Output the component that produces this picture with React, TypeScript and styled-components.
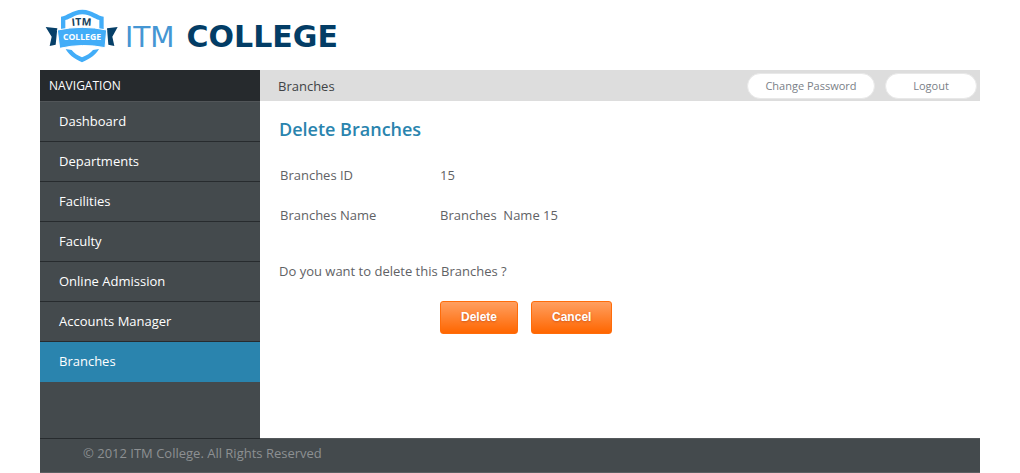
import React from "react";
import styled, { createGlobalStyle } from "styled-components";

const GlobalStyle = createGlobalStyle`
  *, *::before, *::after { box-sizing: border-box; }
  body {
    margin: 0;
    background: #fff;
    color: #5f6265;
    font: 13px/20px "Open Sans", "Noto Sans", sans-serif;
  }
`;

const Page = styled.div`
  display: flex;
  flex-direction: column;
  min-height: 100vh;
  padding: 0 40px;
`;

const Header = styled.header`
  height: 70px;
  padding: 8px 5px 0;
`;

const Brand = styled.a`
  display: inline-flex;
  align-items: center;
  gap: 6px;
  text-decoration: none;
`;

const Wordmark = styled.span`
  display: flex;
  align-items: baseline;
  gap: 12px;
  padding-top: 2px;
  font: 28px/32px "DejaVu Sans", sans-serif;
  color: #4596d3;
`;

const College = styled.strong`
  font-size: 30px;
  color: #033d66;
`;

const Main = styled.div`
  display: flex;
  flex: 1;
`;

const Sidebar = styled.nav`
  position: relative;
  width: 220px;
  flex-shrink: 0;
  margin-bottom: -1px;
  background: #444a4d;
  border-bottom: 1px solid #272b2e;
`;

const NavTitle = styled.h2`
  margin: 0;
  height: 31px;
  padding: 0 9px;
  background: #262a2d;
  color: #fff;
  font-size: 12px;
  font-weight: 400;
  line-height: 31px;
`;

const NavList = styled.ul`
  margin: 0;
  padding: 0;
  list-style: none;
  border-top: 1px solid #515558;
`;

const NavLink = styled.a<{ $active?: boolean }>`
  display: block;
  height: 40px;
  padding: 0 19px;
  line-height: 38px;
  color: #fff;
  text-decoration: none;
  background: ${(p) => (p.$active ? "#2a84ae" : "transparent")};
  border-bottom: 1px solid ${(p) => (p.$active ? "#2a84ae" : "#272b2e")};
`;

const Content = styled.main`
  flex: 1;
  min-width: 0;
`;

const TopBar = styled.div`
  display: flex;
  align-items: center;
  justify-content: space-between;
  height: 31px;
  padding: 0 3px 0 18px;
  background: #ddd;
  color: #3f4346;
`;

const Actions = styled.div`
  display: flex;
  gap: 10px;
`;

const Pill = styled.button<{ $wide?: boolean }>`
  width: ${(p) => (p.$wide ? 128 : 92)}px;
  height: 26px;
  padding: 0;
  border: 1px solid #e8e8e8;
  border-radius: 13px;
  background: #fff;
  color: #7a8087;
  font: 11px/24px "Open Sans", "Noto Sans", sans-serif;
  cursor: pointer;
`;

const Panel = styled.section`
  padding: 16px 19px;
`;

const Title = styled.h1`
  margin: 0 0 24px;
  font-size: 18px;
  font-weight: 600;
  line-height: 24px;
  color: #2a84ae;
`;

const Fields = styled.dl`
  display: grid;
  grid-template-columns: 160px 1fr;
  row-gap: 20px;
  margin: 0 1px 36px;
`;

const Value = styled.dd`
  margin: 0;
`;

const Question = styled.p`
  margin: 0 0 20px;
`;

const ButtonRow = styled.div`
  display: flex;
  gap: 13px;
  padding-left: 161px;
`;

const OrangeButton = styled.button`
  height: 33px;
  padding: 0 20px 2px;
  border: 1px solid #ff6c0a;
  border-radius: 3px;
  background: linear-gradient(#ff9f60, #ff6600);
  color: #fff;
  font: bold 12px "Liberation Sans", sans-serif;
  text-shadow: 0 1px 2px rgba(150, 40, 0, 0.4);
  cursor: pointer;
`;

const Footer = styled.footer`
  height: 35px;
  padding: 4px 43px 0;
  background: #444a4d;
  border-top: 1px solid #54585b;
  border-bottom: 1px solid #5b5f62;
  color: #8d9092;
`;

const Crest = () => (
  <svg width="74" height="56" viewBox="28 24 222 168" aria-hidden="true">
    <path
      d="M76 88V50C94 48 108 30 140 29C172 30 186 48 204 50V88H191V60C174 57 164 43 140 43C116 43 107 57 89 60V88Z"
      fill="#42adf8"
    />
    <path
      d="M90 147L108 150Q119 164 139 172Q160 164 172 150L190 147C181 164 166 174 139 187C113 174 99 164 90 147Z"
      fill="#42adf8"
    />
    <path d="M30 81L65 85L60 134L42 138L48 110Z" fill="#063f68" />
    <path d="M246 81L214 85L218 134L236 138L230 110Z" fill="#063f68" />
    <path
      d="M65 90Q140 74 213 90L208 143Q140 129 72 145Z"
      fill="#42adf8"
      stroke="#fff"
      strokeWidth="3"
    />
    <path id="crest-arc" d="M90 81Q138 71 186 81" fill="none" />
    <text
      fontFamily="Open Sans, sans-serif"
      fontWeight="700"
      fontSize="31"
      fill="#153f5d"
      textAnchor="middle"
    >
      <textPath href="#crest-arc" startOffset="50%">
        ITM
      </textPath>
    </text>
    <text
      x="139"
      y="120"
      fontFamily="Open Sans, sans-serif"
      fontWeight="700"
      fontSize="26"
      fill="#fff"
      textAnchor="middle"
    >
      COLLEGE
    </text>
  </svg>
);

const sections = [
  "Dashboard",
  "Departments",
  "Facilities",
  "Faculty",
  "Online Admission",
  "Accounts Manager",
  "Branches",
];

export default function App() {
  return (
    <>
      <GlobalStyle />
      <Page>
        <Header>
          <Brand href="#">
            <Crest />
            <Wordmark>
              <span>ITM</span>
              <College>COLLEGE</College>
            </Wordmark>
          </Brand>
        </Header>
        <Main>
          <Sidebar>
            <NavTitle>NAVIGATION</NavTitle>
            <NavList>
              {sections.map((name) => (
                <li key={name}>
                  <NavLink
                    href="#"
                    $active={name === "Branches"}
                    aria-current={name === "Branches" ? "page" : undefined}
                  >
                    {name}
                  </NavLink>
                </li>
              ))}
            </NavList>
          </Sidebar>
          <Content>
            <TopBar>
              <span>Branches</span>
              <Actions>
                <Pill type="button" $wide>
                  Change Password
                </Pill>
                <Pill type="button">Logout</Pill>
              </Actions>
            </TopBar>
            <Panel>
              <Title>Delete Branches</Title>
              <Fields>
                <dt>Branches ID</dt>
                <Value>15</Value>
                <dt>Branches Name</dt>
                <Value>{"Branches \u00a0Name 15"}</Value>
              </Fields>
              <Question>Do you want to delete this Branches ?</Question>
              <ButtonRow>
                <OrangeButton type="button">Delete</OrangeButton>
                <OrangeButton type="button">Cancel</OrangeButton>
              </ButtonRow>
            </Panel>
          </Content>
        </Main>
        <Footer>© 2012 ITM College. All Rights Reserved</Footer>
      </Page>
    </>
  );
}
